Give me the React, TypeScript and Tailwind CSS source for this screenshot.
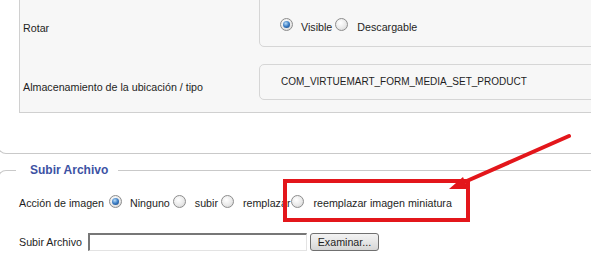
import React from "react";

function Radio({ checked = false }: { checked?: boolean }) {
  return (
    <span className="mb-[4px] inline-flex h-[13px] w-[13px] shrink-0 items-center justify-center rounded-full border border-[#8d8d8d] bg-[radial-gradient(circle_at_40%_35%,#ffffff_0%,#e9e9e9_55%,#cfcfcf_100%)]">
      {checked && (
        <span className="h-[7px] w-[7px] rounded-full bg-[radial-gradient(circle_at_40%_35%,#b8dcf7_0%,#3a7cc4_50%,#123d73_100%)]" />
      )}
    </span>
  );
}

export default function App() {
  return (
    <div className="relative h-[257px] w-[591px] overflow-hidden bg-white font-['Liberation_Sans',Arial,sans-serif] text-[10.7px] leading-[14px] text-[#1e1e1e]">
      {/* upper form table */}
      <div className="-mt-[20px] ml-[19px] w-[640px] border border-[#d0d0d0] bg-[#f7f7f7] pb-[12px]">
        <div className="flex">
          <div className="w-[239px] pl-[3px] pt-[40px]">Rotar</div>
          <div className="mr-[20px] mt-[4px] flex flex-1 items-center rounded-[5px] border border-[#d6d6d6] pb-[11px] pl-[20px] pt-[32px]">
            <Radio checked />
            <span className="ml-[8px]">Visible</span>
            <span className="ml-[3px] flex">
              <Radio />
            </span>
            <span className="ml-[9px]">Descargable</span>
          </div>
        </div>
        <div className="flex">
          <div className="w-[239px] pl-[3px] pt-[33px]">Almacenamiento de la ubicación / tipo</div>
          <div className="mr-[20px] mt-[17px] flex h-[36px] flex-1 items-center rounded-[5px] border border-[#d6d6d6] pl-[21px] text-[10px]">
            COM_VIRTUEMART_FORM_MEDIA_SET_PRODUCT
          </div>
        </div>
      </div>

      {/* bottom of previous fieldset */}
      <div className="-ml-[2px] mt-[21px] h-[20px] w-[700px] rounded-bl-[8px] border-b border-l border-[#c9c9c9]" />

      <fieldset className="-ml-[2px] mt-[10px] w-[700px] rounded-tl-[8px] border-l border-t border-[#c9c9c9] p-0">
        <legend className="ml-[17px] pl-[14px] pr-[10px] text-[12px] font-bold leading-[12px] text-[#3c52a3]">
          Subir Archivo
        </legend>
        <div className="pl-[20px] pt-[19px]">
          <div className="flex h-[16px] items-center">
            <span>Acción de imagen</span>
            <span className="ml-[5px] flex"><Radio checked /></span>
            <span className="ml-[8px]">Ninguno</span>
            <span className="ml-[3px] flex"><Radio /></span>
            <span className="ml-[9px]">subir</span>
            <span className="ml-[3px] flex"><Radio /></span>
            <span className="ml-[9px]">remplazar</span>
            <span className="ml-[1px] flex"><Radio /></span>
            <span className="ml-[9px]">reemplazar imagen miniatura</span>
          </div>
          <div className="mt-[22px] flex h-[18px] items-center">
            <span>Subir Archivo</span>
            <span className="ml-[6px] h-[18px] w-[219px] border-b border-l-2 border-r border-t-2 border-b-[#e3e3e3] border-l-[#777] border-r-[#e3e3e3] border-t-[#777] bg-white" />
            <button className="ml-[3px] h-[18px] w-[69px] rounded-[3px] border border-[#707070] bg-[linear-gradient(#f3f3f3,#e6e6e6_50%,#d6d6d6)] text-[10.7px] leading-[14px] text-[#1e1e1e]">
              Examinar...
            </button>
          </div>
        </div>
      </fieldset>

      {/* red annotation */}
      <div className="pointer-events-none absolute left-[283px] top-[179px] h-[43px] w-[187px] border-4 border-[#e3161b]" />
      <svg className="pointer-events-none absolute left-0 top-0" width="591" height="257">
        <line x1="569" y1="136" x2="460" y2="184" stroke="#e3161b" strokeWidth="4" strokeLinecap="round" />
        <polygon points="449,189 463,177 468,189" fill="#e3161b" />
      </svg>
    </div>
  );
}
